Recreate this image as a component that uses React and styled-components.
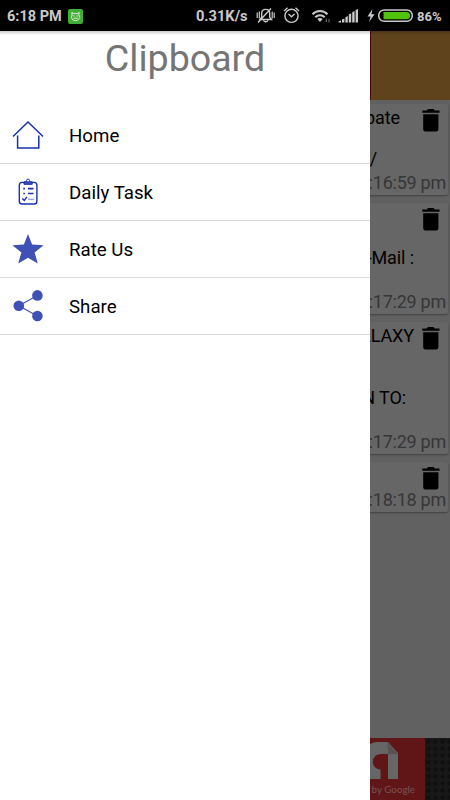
import styled, { createGlobalStyle } from "styled-components"

const GlobalStyle = createGlobalStyle`
  * {
    box-sizing: border-box;
  }
  body {
    margin: 0;
    background: #000;
    font-family: Roboto, "Liberation Sans", sans-serif;
  }
`

const menu = [
  { label: "Home", icon: HomeIcon },
  { label: "Daily Task", icon: TaskIcon },
  { label: "Rate Us", icon: StarIcon },
  { label: "Share", icon: ShareIcon },
]

const clips = [
  { height: 91, lines: [{ text: "Debate", end: 48 }, { text: "" }, { text: "/", end: 71 }], time: "06:16:59 pm" },
  { height: 111, lines: [{ text: "" }, { text: "" }, { text: "E-Mail :", end: 34 }], time: "06:17:29 pm" },
  { height: 132, lines: [{ text: "GALAXY", end: 34 }, { text: "" }, { text: "" }, { text: "RETURN TO:", end: 42 }], time: "06:17:29 pm" },
  { height: 50, lines: [], time: "06:18:18 pm" },
]

export default function App() {
  return (
    <Screen>
      <GlobalStyle />
      <StatusBar />
      <Main>
        <Toolbar />
        <ClipList>
          {clips.map((clip, i) => (
            <Card key={i} $height={clip.height}>
              <Lines>
                {clip.lines.map((line, j) => (
                  <Line key={j} $end={line.end}>{line.text}</Line>
                ))}
              </Lines>
              <Time>{clip.time}</Time>
              <TrashIcon />
            </Card>
          ))}
        </ClipList>
        <AdBanner>
          <AdLogo>
            <AdMobMark />
            <AdText>AdMob by Google</AdText>
          </AdLogo>
          <AdPattern />
        </AdBanner>
        <Drawer>
          <Title>Clipboard</Title>
          {menu.map(({ label, icon: Icon }) => (
            <MenuItem key={label}>
              <Icon />
              <Label>{label}</Label>
            </MenuItem>
          ))}
        </Drawer>
        <TopShade />
      </Main>
    </Screen>
  )
}

function StatusBar() {
  return (
    <Status>
      <Clock>6:18 PM</Clock>
      <svg width="15" height="15" viewBox="0 0 15 15">
        <rect width="15" height="15" rx="2" fill="#3eae35" />
        <path d="M4.2 6L3.8 3.4L5.8 4.6H9.2L11.2 3.4L10.8 6L11.8 8.4L10.2 10.8L7.5 11.8L4.8 10.8L3.2 8.4Z" fill="none" stroke="#e3efdf" strokeWidth="1" />
        <path d="M5.2 7h1.5M8.4 7h1.5M5.5 9.2h4" stroke="#e3efdf" />
      </svg>
      <Speed>0.31K/s</Speed>
      <StatusIcons width="204" height="22" viewBox="246 5 204 22" fill="none">
        <g stroke="#c9c9c9" strokeWidth="1.4">
          <path d="M260 19.5h11.5l-1.8-2.2v-4.1c0-2.5-1.6-3.8-4-3.8s-4 1.3-4 3.8v4.1zM263.5 20.5c1 1.7 3.5 1.7 4.5 0M258 22.5L271 8.5" />
          <path d="M257.2 12.5v5.5M259.3 11.5v7M272.2 11.5v7M274.2 12.5v5.5" strokeWidth="1.2" />
          <circle cx="291.5" cy="15.8" r="6.6" />
          <path d="M284 11l3.5-3.2M295.5 7.8L299 11M288.5 14l3 2.7 3-2.8" />
        </g>
        <g stroke="#c9c9c9" strokeWidth="2">
          <path d="M312.5 14.3c4-4.3 11-4.3 15 0M315.3 17.2c2.7-2.7 6.7-2.7 9.4 0" />
          <path d="M317.3 19c1.5-1.4 3.9-1.4 5.4 0L320 22z" fill="#c9c9c9" stroke="none" />
          <path d="M326.3 18.5v3.5M329 19v3.5" stroke="#777" strokeWidth="1" />
        </g>
        <g fill="#c9c9c9">
          <path d="M338.5 22.5v-1l2.5-1v2zM342 22.5v-3l2.4-1v4zM345.4 22.5v-5.2l2.4-1.2v6.4zM348.8 22.5v-8l2.4-1.2v9.2zM352.2 22.5V12.2l2.4-1.2v11.5zM355.6 22.5V10l2.4-1v13.5z" />
          <path d="M372.5 9l-5 7.5h3.1l-1.6 5.5 5.6-7.8h-3.2z" />
        </g>
        <rect x="378.7" y="9.9" width="33.6" height="11.4" rx="5.5" stroke="#c9c9c9" strokeWidth="1.5" />
        <path d="M383.5 12h23a3.6 3.6 0 010 7.2h-23z" fill="#4fc20c" />
      </StatusIcons>
      <Battery>86%</Battery>
    </Status>
  )
}

function HomeIcon() {
  return (
    <MenuIcon viewBox="0 0 32 32" fill="none" stroke="#1930b0">
      <path d="M1 17.5L16 3L31 17.5M5.6 16.5V29H26.8V16.5" strokeWidth="1.5" />
    </MenuIcon>
  )
}

function TaskIcon() {
  return (
    <MenuIcon viewBox="0 0 32 32" fill="none" stroke="#1930b0">
      <rect x="7.3" y="6.4" width="17.6" height="21.6" rx="2.8" strokeWidth="1.4" />
      <path d="M12 8.3V5.8h2.3a1.9 1.9 0 013.6 0h2.3v2.5z" fill="#3c51bd" />
      <circle cx="16.1" cy="4.6" r="1.5" fill="#fff" />
      <path d="M11.3 12.6h1.6M11.3 17.5h1.6M16 12.6h5.5M16 17.5h5.5" strokeWidth="1.6" />
      <path d="M10.3 22.5l2 2 2.6-3.7" strokeWidth="1.4" />
      <path d="M16 23.4h6" stroke="#97a3dc" strokeWidth="1.4" />
    </MenuIcon>
  )
}

function StarIcon() {
  return (
    <MenuIcon viewBox="0 0 32 32" fill="#3f51b5">
      <path d="M16 1L20.1 11.6L31.6 12.2L22.6 19.4L25.8 30.6L16 24.8L6.2 30.6L9.4 19.4L0.4 12.2L11.9 11.6Z" />
    </MenuIcon>
  )
}

function ShareIcon() {
  return (
    <MenuIcon viewBox="0 0 32 32" fill="#3f51b5">
      <path d="M25.4 5.4L6.8 15.8L25.4 26" fill="none" stroke="#3f51b5" strokeWidth="1.1" />
      <circle cx="25.4" cy="5.4" r="5.3" />
      <circle cx="6.8" cy="15.8" r="5.3" />
      <circle cx="25.4" cy="26" r="5.3" />
    </MenuIcon>
  )
}

function TrashIcon() {
  return (
    <Trash viewBox="0 0 18 23">
      <path d="M1.2 5.3h15.2v14.9a2.2 2.2 0 01-2.2 2.2H3.4a2.2 2.2 0 01-2.2-2.2zM0.3 1.4h4.4L6 0h5.6l1.2 1.4h4.7v2.4H0.3z" />
    </Trash>
  )
}

function AdMobMark() {
  return (
    <Mark viewBox="0 0 36 38">
      <path d="M0 37V18C0 7 7 0 16 0h10L36 11V37H26V12H18.5a7.7 7.7 0 000 15.5V37z" fill="#666" />
      <path d="M25.5 0L36 11v1H26z" fill="#5b5353" />
    </Mark>
  )
}

const Screen = styled.div`
  display: flex;
  flex-direction: column;
  width: 450px;
  height: 800px;
  overflow: hidden;
`
const Status = styled.header`
  display: flex;
  align-items: center;
  flex-shrink: 0;
  height: 31px;
  padding: 1px 0 0 7px;
  background: #000;
  color: #c9c9c9;
  font-weight: 700;
  white-space: nowrap;
`
const Clock = styled.span`
  width: 61px;
  font-size: 14.5px;
`
const Speed = styled.span`
  width: 52px;
  margin-left: 113px;
  font-size: 14.6px;
`
const StatusIcons = styled.svg`
  flex-shrink: 0;
  margin-left: -2px;
`
const Battery = styled.span`
  margin-left: -33px;
  font-size: 13px;
`
const Main = styled.main`
  position: relative;
  display: flex;
  flex-direction: column;
  flex: 1;
  background: #616161;
`
const Toolbar = styled.div`
  height: 69px;
  border-left: 371px solid #4a0508;
  background: #5f431d;
`
const ClipList = styled.section`
  display: flex;
  flex-direction: column;
  flex: 1;
  gap: 8px;
  padding: 4px 2px;
`
const Card = styled.article`
  position: relative;
  display: flex;
  flex-direction: column;
  justify-content: space-between;
  height: ${(props) => props.$height}px;
  border-radius: 2px;
  background: #666;
  box-shadow: 0 1px 2px rgba(0, 0, 0, 0.35);
`
const Lines = styled.div`
  padding-top: 4px;
`
const Line = styled.p`
  height: 20.5px;
  margin: 0;
  padding-right: ${(props) => props.$end || 0}px;
  color: #000;
  font-size: 18px;
  line-height: 20.5px;
  letter-spacing: -0.1px;
  text-align: right;
`
const Time = styled.time`
  padding: 0 2px 1px 0;
  color: #363636;
  font-size: 18px;
  line-height: 23px;
  letter-spacing: -0.25px;
  text-align: right;
`
const Trash = styled.svg`
  position: absolute;
  top: 5px;
  right: 8px;
  width: 18px;
  height: 23px;
`
const AdBanner = styled.footer`
  display: flex;
  height: 62px;
`
const AdLogo = styled.div`
  display: flex;
  flex-direction: column;
  align-items: flex-end;
  width: 425px;
  padding: 4px 10px 0 0;
  background: #601617;
`
const Mark = styled.svg`
  width: 36px;
  height: 38px;
  margin-right: 17px;
`
const AdText = styled.span`
  margin-top: 3px;
  color: #785252;
  font-family: Lato, sans-serif;
  font-size: 9.8px;
  line-height: 12px;
`
const AdPattern = styled.div`
  flex: 1;
  background: #151515 radial-gradient(circle, #101010 1.5px, #181818 3px) 0 0 / 7px 7px;
`
const Drawer = styled.nav`
  position: absolute;
  top: 0;
  bottom: 0;
  left: 0;
  width: 370px;
  background: #fff;
`
const Title = styled.h1`
  height: 76px;
  margin: 0;
  padding-top: 4px;
  color: #757575;
  font-size: 37.6px;
  font-weight: 400;
  line-height: 46px;
  text-align: center;
`
const MenuItem = styled.div`
  display: flex;
  align-items: center;
  gap: 25px;
  height: 57px;
  padding-left: 12px;
  border-bottom: 1px solid #dadada;
`
const MenuIcon = styled.svg`
  width: 32px;
  height: 32px;
`
const Label = styled.span`
  padding-top: 2px;
  color: #000;
  font-size: 18.7px;
`
const TopShade = styled.div`
  position: absolute;
  inset: 0 0 auto;
  height: 4px;
  background: linear-gradient(rgba(0, 0, 0, 0.2), transparent);
`
